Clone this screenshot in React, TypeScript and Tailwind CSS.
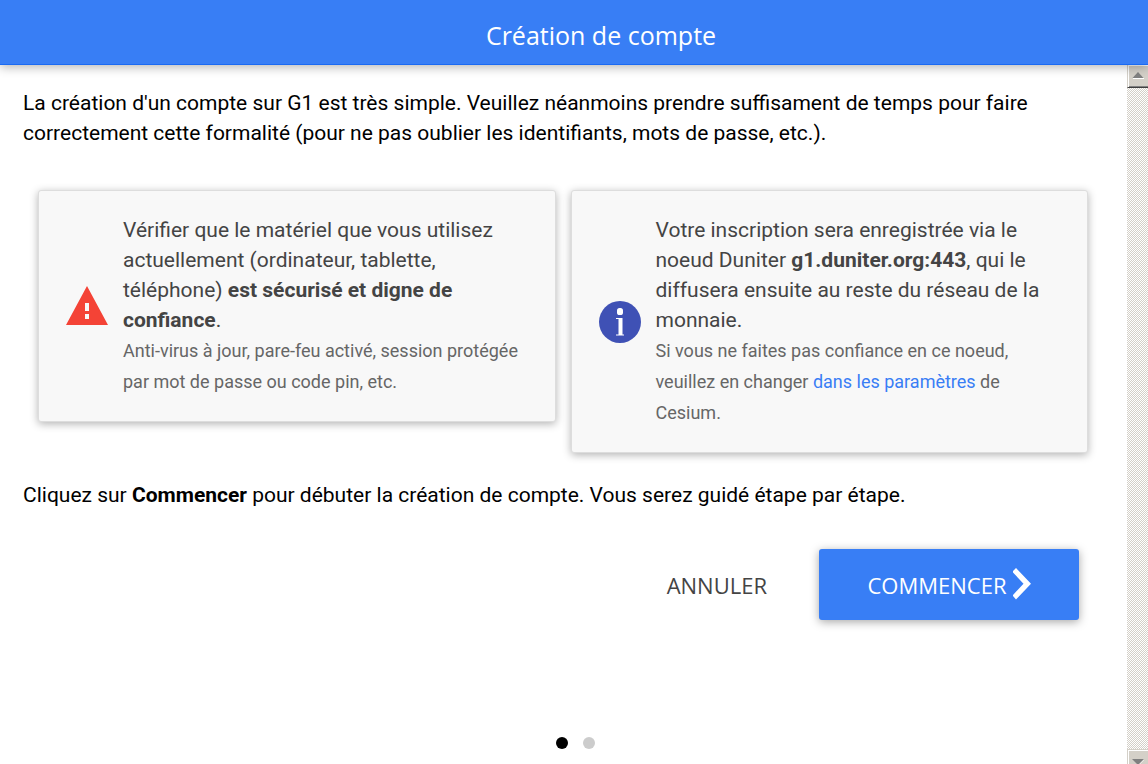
import React from "react";

const slides = ["Introduction", "Type de compte"];

const WarningIcon = () => (
	<svg viewBox="0 0 42 40" className="w-[42px] shrink-0" aria-hidden="true">
		<path
			fill="#f44336"
			fillRule="evenodd"
			d="M21 0L42 39H0zM19 17v8h4v-8zM19 28v5h4v-5z"
		/>
	</svg>
);

const InfoIcon = () => (
	<svg viewBox="0 0 42 42" className="w-[42px] shrink-0" aria-hidden="true">
		<circle cx="21" cy="21" r="21" fill="#3f51b5" />
		<rect x="18" y="7" width="6" height="7" rx="2.6" fill="#fff" />
		<path fill="#fff" d="M17 17h6.500v16.500H25V34.500H17V33.500h2.500V18H17z" />
	</svg>
);

const ChevronIcon = () => (
	<svg viewBox="0 0 18 34" className="h-[34px] shrink-0" aria-hidden="true">
		<path fill="#fff" d="M3 0L18 15.700 3 31.400 0 28V27L10.500 15.700 0 4.400V3z" />
	</svg>
);

const Card = ({ icon, children }: CardProps) => (
	<section className="flex items-center gap-[15px] rounded-[3px] border border-[#ddd] bg-[#f8f8f8] py-6 pr-6 pl-[27px] text-[#444] shadow-[0_2px_8px_rgba(0,0,0,0.3)]">
		{icon}
		<div className="min-w-0 flex-1">{children}</div>
	</section>
);

const Scrollbar = () => (
	<div className="flex w-[21px] shrink-0 flex-col bg-[repeating-conic-gradient(#d4d0c8_0_25%,#fff_0_50%)] bg-[length:2px_2px]">
		<button
			type="button"
			aria-label="Défiler vers le haut"
			className="flex h-[23px] items-center justify-center border-b border-l border-b-[#404040] border-l-[#d4d0c8] bg-[#d4d0c8] shadow-[inset_1px_1px_0_#fff,inset_0_-1px_0_#808080]"
		>
			<svg viewBox="0 0 12 9" className="w-3">
				<path fill="#fff" d="M1 6h11v1H1z" />
				<path fill="#808080" d="M6 0l5.500 6H.5z" />
			</svg>
		</button>
		<div className="flex-1" />
		<button
			type="button"
			aria-label="Défiler vers le bas"
			className="flex h-[15px] items-end justify-center overflow-hidden border-t border-l border-[#d4d0c8] bg-[#d4d0c8] shadow-[inset_1px_1px_0_#fff]"
		>
			<svg viewBox="0 0 12 6" className="w-3">
				<path fill="#fff" d="M12 1v1L8 6H7z" />
				<path fill="#808080" d="M0 1h12L7 6H5z" />
			</svg>
		</button>
	</div>
);

const App = () => {
	return (
		<div className="relative flex min-h-screen flex-col bg-white font-['Roboto',sans-serif] text-[21px] leading-[30px] text-black">
			<header className="z-10 flex h-[65px] items-center justify-center border-b border-[#1a6af3] bg-[#387ef5] pt-1.5 pl-[54px] shadow-[0_2px_10px_rgba(0,0,0,0.3)]">
				<h1 className="font-['Open_Sans',sans-serif] text-[25px] text-white">
					Création de compte
				</h1>
			</header>

			<div className="flex flex-1">
				<main className="min-w-0 flex-1 pt-[23px] pr-6 pl-[23px]">
					<p>
						La création d'un compte sur G1 est très simple. Veuillez
						néanmoins prendre suffisament de temps pour faire
						correctement cette formalité (pour ne pas oublier les
						identifiants, mots de passe, etc.).
					</p>

					<div className="mt-[42px] grid grid-cols-2 items-start gap-[15px] px-[15px]">
						<Card icon={<WarningIcon />}>
							<h2>
								Vérifier que le matériel que vous utilisez
								actuellement (ordinateur, tablette, téléphone){" "}
								<b>est sécurisé et digne de confiance</b>.
							</h2>
							<p className="text-[18px] leading-[31px] text-[#666]">
								Anti-virus à jour, pare-feu activé, session
								protégée par mot de passe ou code pin, etc.
							</p>
						</Card>
						<Card icon={<InfoIcon />}>
							<h2>
								Votre inscription sera enregistrée via le noeud
								Duniter <b>g1.duniter.org:443</b>, qui le
								diffusera ensuite au reste du réseau de la
								monnaie.
							</h2>
							<p className="text-[18px] leading-[31px] text-[#666]">
								Si vous ne faites pas confiance en ce noeud,
								veuillez en changer{" "}
								<a href="#parametres" className="text-[#387ef5]">
									dans les paramètres
								</a>{" "}
								de Cesium.
							</p>
						</Card>
					</div>

					<p className="mt-[27px]">
						Cliquez sur <b>Commencer</b> pour débuter la création de
						compte. Vous serez guidé étape par étape.
					</p>

					{/* Actions */}
					<div className="mt-[39px] flex justify-end gap-1 pr-6 font-['Open_Sans',sans-serif] text-[22px]">
						<button
							type="button"
							className="h-[71px] px-12 text-[#444]"
						>
							ANNULER
						</button>
						<button
							type="button"
							className="flex h-[71px] w-[260px] items-center justify-center gap-1.5 rounded-[3px] bg-[#387ef5] text-white shadow-[0_2px_10px_rgba(0,0,0,0.35)]"
						>
							COMMENCER
							<ChevronIcon />
						</button>
					</div>
				</main>
				<Scrollbar />
			</div>

			{/* Slide pager, over the bottom of the slide */}
			<nav className="absolute inset-x-0 bottom-[15px] flex justify-center gap-[15px] pl-[3px]">
				{slides.map((slide, index) => (
					<button
						key={slide}
						type="button"
						aria-label={slide}
						aria-current={index === 0}
						className="size-3 rounded-full bg-[#ccc] aria-[current=true]:bg-black"
					/>
				))}
			</nav>
		</div>
	);
};

interface CardProps {
	icon: React.ReactNode;
	children: React.ReactNode;
}

export default App;
